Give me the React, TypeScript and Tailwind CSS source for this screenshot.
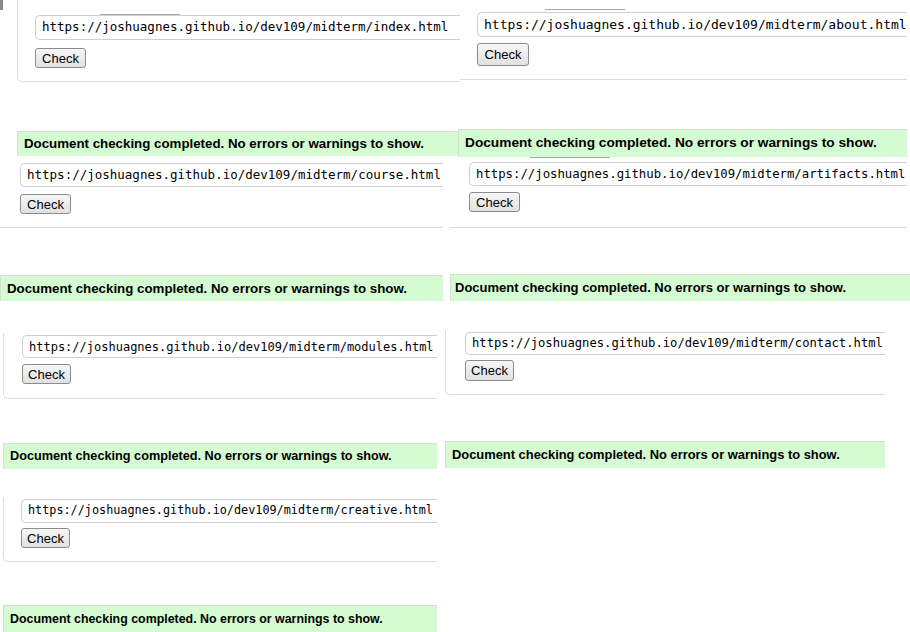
const mono = "font-['DejaVu_Sans_Mono','Liberation_Mono',monospace]";
const sans = "font-['Liberation_Sans',Arial,sans-serif]";
const base = "https://joshuagnes.github.io/dev109/midterm/";

function UrlInput({ page, className }: { page: string; className: string }) {
  return (
    <div
      className={`flex shrink-0 items-center overflow-hidden whitespace-nowrap rounded-[5px] border border-r-0 border-[#cfcfcf] bg-white pl-[6px] text-black ${mono} ${className}`}
    >
      {base + page}
    </div>
  );
}

function CheckButton({ className }: { className: string }) {
  return (
    <button
      className={`flex shrink-0 items-center justify-center rounded-[3px] border border-[#8c8c8c] bg-gradient-to-b from-[#f7f7f7] to-[#e1e1e1] text-[13px] leading-none text-black ${sans} ${className}`}
    >
      Check
    </button>
  );
}

function Banner({ className }: { className: string }) {
  return (
    <div
      className={`flex shrink-0 items-center overflow-hidden whitespace-nowrap border-t border-l border-[#d6dfd4] bg-[#d4fbd1] font-bold text-black ${sans} ${className}`}
    >
      Document checking completed. No errors or warnings to show.
    </div>
  );
}

function TabEdge({ className }: { className: string }) {
  return <div className={`h-px w-[80px] shrink-0 bg-[#a8a8a8] ${className}`} />;
}

export default function App() {
  return (
    <div className="flex h-[632px] w-[910px] overflow-hidden bg-white">
      {/* left column */}
      <div className="flex w-[445px] shrink-0 flex-col">
        <div className="flex h-[82px] shrink-0">
          <div className="h-[10px] w-[3px] shrink-0 bg-[#8a8a8a]" />
          <div className="ml-[14px] flex h-[82px] w-[443px] shrink-0 flex-col overflow-hidden rounded-bl-[5px] border-b border-l border-[#dcdcdc] pl-[17px]">
            <TabEdge className="ml-[65px] mt-[14px]" />
            <UrlInput page="index.html" className="h-[25px] w-[440px] text-[12.5px]" />
            <CheckButton className="mt-[8px] h-[20px] w-[51px]" />
          </div>
        </div>
        <div className="h-[49px] shrink-0" />
        <Banner className="ml-[17px] h-[25px] w-[443px] pl-[6px] text-[13.3px]" />
        <div className="flex h-[72px] w-[443px] shrink-0 flex-col overflow-hidden border-b border-[#dcdcdc] pl-[20px] pt-[7px]">
          <UrlInput page="course.html" className="h-[24px] w-[430px] text-[12.5px]" />
          <CheckButton className="mt-[7px] h-[20px] w-[51px]" />
        </div>
        <div className="h-[47px] shrink-0" />
        <Banner className="h-[26px] w-[443px] pl-[6px] text-[13.3px]" />
        <div className="h-[32px] shrink-0" />
        <div className="ml-[3px] flex h-[66px] w-[434px] shrink-0 flex-col overflow-hidden rounded-bl-[5px] border-b border-l border-[#dcdcdc] pl-[18px] pt-[2px]">
          <UrlInput page="modules.html" className="h-[23px] w-[420px] text-[12px]" />
          <CheckButton className="mt-[6px] h-[20px] w-[49px]" />
        </div>
        <div className="h-[44px] shrink-0" />
        <Banner className="ml-[3px] h-[26px] w-[434px] pl-[6px] text-[12.7px]" />
        <div className="h-[28px] shrink-0" />
        <div className="ml-[3px] flex h-[65px] w-[434px] shrink-0 flex-col overflow-hidden rounded-bl-[5px] border-b border-l border-[#dcdcdc] pl-[17px] pt-[2px]">
          <UrlInput page="creative.html" className="h-[24px] w-[420px] text-[11.8px]" />
          <CheckButton className="mt-[5px] h-[20px] w-[49px]" />
        </div>
        <div className="h-[43px] shrink-0" />
        <Banner className="ml-[3px] h-[27px] w-[434px] pl-[6px] text-[12.4px]" />
      </div>

      {/* right column */}
      <div className="flex w-[465px] shrink-0 flex-col">
        <div className="ml-[15px] flex h-[80px] w-[447px] shrink-0 flex-col overflow-hidden border-b border-[#dcdcdc] pl-[17px]">
          <TabEdge className="ml-[68px] mt-[9px]" />
          <UrlInput page="about.html" className="mt-[2px] h-[25px] w-[433px] text-[13px]" />
          <CheckButton className="mt-[6px] h-[23px] w-[52px]" />
        </div>
        <div className="h-[49px] shrink-0" />
        <Banner className="ml-[13px] h-[28px] w-[449px] pl-[6px] text-[13.7px]" />
        <div className="ml-[5px] flex h-[71px] w-[457px] shrink-0 flex-col overflow-hidden border-b border-[#dcdcdc] pl-[19px]">
          <TabEdge className="ml-[61px]" />
          <UrlInput page="artifacts.html" className="mt-[4px] h-[24px] w-[441px] text-[12.3px]" />
          <CheckButton className="mt-[6px] h-[20px] w-[51px]" />
        </div>
        <div className="h-[46px] shrink-0" />
        <Banner className="ml-[5px] h-[27px] w-[460px] pl-[4px] text-[13px]" />
        <div className="h-[29px] shrink-0" />
        <div className="flex h-[65px] w-[440px] shrink-0 flex-col overflow-hidden rounded-bl-[5px] border-b border-l border-[#dcdcdc] pl-[19px] pt-[2px]">
          <UrlInput page="contact.html" className="h-[23px] w-[425px] text-[12.2px]" />
          <CheckButton className="mt-[5px] h-[21px] w-[49px]" />
        </div>
        <div className="h-[46px] shrink-0" />
        <Banner className="h-[27px] w-[440px] pl-[6px] text-[12.9px]" />
      </div>
    </div>
  );
}
